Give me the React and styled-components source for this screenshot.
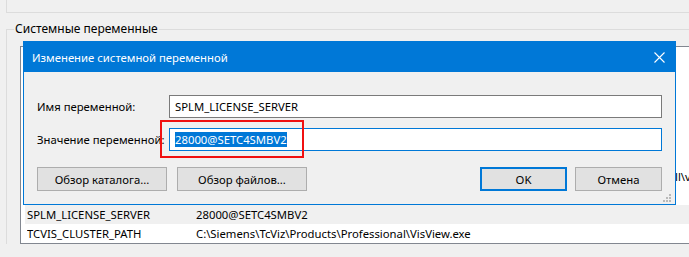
import React from "react";
import styled, { createGlobalStyle } from "styled-components";

const GlobalStyle = createGlobalStyle`
  body {
    margin: 0;
    background: #f0f0f0;
    font-family: "Noto Sans", "Open Sans", sans-serif;
    font-size: 11.3px;
    color: #000;
  }
`;

const Screen = styled.div`
  position: relative;
  width: 689px;
  height: 257px;
  overflow: hidden;
  background: #f0f0f0;
`;

const PrevGroup = styled.div`
  margin-left: 6px;
  height: 12px;
  width: 720px;
  border-left: 1px solid #dcdcdc;
  border-bottom: 1px solid #dcdcdc;
`;

const Group = styled.fieldset`
  margin: 8px 0 0 6px;
  padding: 9px 0 0 13px;
  width: 720px;
  border: 1px solid #dcdcdc;
  border-right: none;
  border-bottom: none;
  min-width: 0;
`;

const Legend = styled.legend`
  margin-left: -6px;
  padding: 0 1px;
  line-height: 16px;
  font-size: 12px;
`;

const List = styled.div`
  height: 196px;
  background: #fff;
  border: 1px solid #828790;
  border-right: none;
  overflow: hidden;
`;

const Header = styled.div`
  height: 25px;
`;

const Row = styled.div`
  display: grid;
  grid-template-columns: 169px 1fr;
  height: 19px;
  line-height: 19px;
  margin-left: 4px;
  padding-left: 2px;
  white-space: nowrap;
  background: ${(p) => (p.$selected ? "#f0f0f0" : "#fff")};
`;

const Cell = styled.span`
  overflow: hidden;
`;

const Dialog = styled.div`
  position: absolute;
  left: 23px;
  top: 41px;
  width: 651px;
  height: 162px;
  border: 1px solid #0078d7;
  background: #f0f0f0;
  display: flex;
  flex-direction: column;
`;

const TitleBar = styled.div`
  height: 30px;
  background: #0078d7;
  color: #fff;
  display: flex;
  align-items: center;
  justify-content: space-between;
  padding: 0 10px 0 8px;
`;

const Title = styled.span`
  font-size: 11.3px;
`;

const CloseIcon = styled.svg`
  width: 11px;
  height: 11px;
  display: block;
`;

const Body = styled.div`
  position: relative;
  flex: 1;
  padding: 23px 13px 13px;
  display: flex;
  flex-direction: column;
`;

const Field = styled.div`
  display: grid;
  grid-template-columns: 132px 1fr;
  align-items: center;
  margin-bottom: ${(p) => p.$gap}px;
`;

const Label = styled.label`
  white-space: nowrap;
`;

const Input = styled.div`
  height: 21px;
  border: 1px solid ${(p) => (p.$focused ? "#0078d7" : "#7a7a7a")};
  background: #fff;
  padding-left: 5px;
  display: flex;
  align-items: center;
`;

const Selected = styled.span`
  background: #0078d7;
  color: #fff;
  line-height: 15px;
`;

const Buttons = styled.div`
  display: flex;
  gap: 10px;
`;

const Button = styled.button`
  width: ${(p) => p.$w}px;
  height: 24px;
  margin-left: ${(p) => (p.$push ? "auto" : `${p.$ml || 0}px`)};
  font: inherit;
  color: #000;
  background: #e1e1e1;
  border: ${(p) => (p.$default ? "2px solid #0078d7" : "1px solid #adadad")};
  padding: 0;
`;

const Grip = styled.svg`
  position: absolute;
  right: 3px;
  bottom: 1px;
  width: 9px;
  height: 9px;
`;

const Annotation = styled.div`
  position: absolute;
  left: 160px;
  top: 120px;
  width: 140px;
  height: 34px;
  border: 2px solid #f01010;
`;

const rows = [
  ["ComSpec", "C:\\Windows\\system32\\cmd.exe"],
  ["NUMBER_OF_PROCESSORS", "4"],
  ["OS", "Windows_NT"],
  ["Path", "C:\\Windows\\system32;C:\\Windows;C:\\Windows\\System32\\Wbem"],
  ["PATHEXT", ".COM;.EXE;.BAT;.CMD;.VBS;.VBE;.JS;.JSE;.WSF;.WSH;.MSC"],
  ["PSModulePath", "C:\\Program Files\\WindowsPowerShell\\Modules\\;C:\\Windows\\System32\\WindowsPowerShell\\v1.0\\Modules"],
  ["RlsSvcPort", "22112"],
  ["SPLM_LICENSE_SERVER", "28000@SETC4SMBV2", true],
  ["TCVIS_CLUSTER_PATH", "C:\\Siemens\\TcViz\\Products\\Professional\\VisView.exe"],
  ["TEMP", "C:\\Windows\\TEMP"],
];

export default function App() {
  return (
    <Screen>
      <GlobalStyle />
      <PrevGroup />
      <Group>
        <Legend>Системные переменные</Legend>
        <List>
          <Header />
          {rows.map(([name, value, sel]) => (
            <Row key={name} $selected={sel}>
              <Cell>{name}</Cell>
              <Cell>{value}</Cell>
            </Row>
          ))}
        </List>
      </Group>

      <Dialog>
        <TitleBar>
          <Title>Изменение системной переменной</Title>
          <CloseIcon viewBox="0 0 11 11">
            <path d="M0.5 0.5 L10.5 10.5 M10.5 0.5 L0.5 10.5" stroke="#fff" strokeWidth="1.1" />
          </CloseIcon>
        </TitleBar>
        <Body>
          <Field $gap={10}>
            <Label>Имя переменной:</Label>
            <Input>SPLM_LICENSE_SERVER</Input>
          </Field>
          <Field $gap={16}>
            <Label>Значение переменной:</Label>
            <Input $focused>
              <Selected>28000@SETC4SMBV2</Selected>
            </Input>
          </Field>
          <Buttons>
            <Button $w={130}>Обзор каталога...</Button>
            <Button $w={130}>Обзор файлов...</Button>
            <Button $w={87} $push $default>OK</Button>
            <Button $w={87} $ml={-2}>Отмена</Button>
          </Buttons>
          <Grip viewBox="0 0 9 9">
            <rect x="6" y="0" width="2" height="2" fill="#b9b9b9" />
            <rect x="3" y="3" width="2" height="2" fill="#b9b9b9" />
            <rect x="6" y="3" width="2" height="2" fill="#b9b9b9" />
            <rect x="0" y="6" width="2" height="2" fill="#b9b9b9" />
            <rect x="3" y="6" width="2" height="2" fill="#b9b9b9" />
            <rect x="6" y="6" width="2" height="2" fill="#b9b9b9" />
          </Grip>
        </Body>
      </Dialog>
      <Annotation />
    </Screen>
  );
}
